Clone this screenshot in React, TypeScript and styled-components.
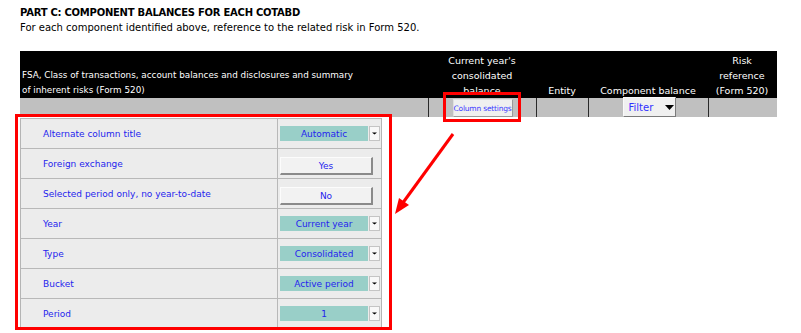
import styled, { createGlobalStyle } from "styled-components";

const GlobalStyle = createGlobalStyle`
    body {
        margin: 0;
        background: #ffffff;
        font-family: "DejaVu Sans", Verdana, sans-serif;
    }
`

type Setting = {
    label: string
    value: string
    kind: "select" | "button"
}

const settings: Setting[] = [
    {label: "Alternate column title", value: "Automatic", kind: "select"},
    {label: "Foreign exchange", value: "Yes", kind: "button"},
    {label: "Selected period only, no year-to-date", value: "No", kind: "button"},
    {label: "Year", value: "Current year", kind: "select"},
    {label: "Type", value: "Consolidated", kind: "select"},
    {label: "Bucket", value: "Active period", kind: "select"},
    {label: "Period", value: "1", kind: "select"},
]

const columns = [
    {width: 409, align: "left", size: 8.8, lines: ["FSA, Class of transactions, account balances and disclosures and summary", "of inherent risks (Form 520)"]},
    {width: 108, align: "center", size: 9.5, lines: ["Current year's", "consolidated", "balance"]},
    {width: 52, align: "center", size: 9.5, lines: ["Entity"]},
    {width: 120, align: "center", size: 9.5, lines: ["Component balance"]},
    {width: 68, align: "center", size: 9.5, lines: ["Risk", "reference", "(Form 520)"]},
]

export default function App() {
    return (
        <Page>
            <GlobalStyle/>
            <Title>PART C: COMPONENT BALANCES FOR EACH COTABD</Title>
            <Subtitle>For each component identified above, reference to the related risk in Form 520.</Subtitle>

            <Table>
                <HeaderRow>
                    {columns.map((c, i) => (
                        <HeadCell key={i} $width={c.width} $align={c.align} $size={c.size}>
                            {c.lines.map((l, j) => <div key={j}>{l}</div>)}
                        </HeadCell>
                    ))}
                </HeaderRow>
                <ToolRow>
                    <ToolCell $width={409}/>
                    <ToolCell $width={108}>
                        <SettingsButton>Column settings</SettingsButton>
                    </ToolCell>
                    <ToolCell $width={52}/>
                    <ToolCell $width={120}>
                        <FilterButton>
                            <span>Filter</span>
                            <svg width="9" height="5" viewBox="0 0 9 5"><polygon points="0,0 9,0 4.5,5" fill="#000"/></svg>
                        </FilterButton>
                    </ToolCell>
                    <ToolCell $width={68} $last/>
                </ToolRow>
            </Table>

            <Panel>
                {settings.map((s) => (
                    <PanelRow key={s.label}>
                        <Label>{s.label}</Label>
                        <ValueCell>
                            {s.kind === "select" ? (
                                <SelectWrap>
                                    <SelectField>{s.value}</SelectField>
                                    <SelectArrow>
                                        <svg width="5" height="3" viewBox="0 0 5 3"><polygon points="0,0.5 5,0.5 2.5,2.5" fill="#000"/></svg>
                                    </SelectArrow>
                                </SelectWrap>
                            ) : (
                                <ToggleButton>{s.value}</ToggleButton>
                            )}
                        </ValueCell>
                    </PanelRow>
                ))}
            </Panel>

            <Highlight style={{left: 15, top: 114, width: 377, height: 216}}/>
            <Highlight style={{left: 443, top: 92, width: 78, height: 30}}/>
            <Arrow width="70" height="90" viewBox="0 0 70 90">
                <line x1="63" y1="6" x2="12" y2="76" stroke="#ff0000" strokeWidth="3"/>
                <polygon points="5,86 9,70 19,77" fill="#ff0000"/>
            </Arrow>
        </Page>
    );
}

const Page = styled.div`
    position: relative;
    width: 801px;
    height: 333px;
    padding: 5px 0 0 20px;
    box-sizing: border-box;
    font-size: 10px;
    overflow: hidden;
`

const Title = styled.div`
    font-weight: 700;
    line-height: 15px;
    letter-spacing: -0.25px;
    color: #000;
`

const Subtitle = styled.div`
    line-height: 15px;
    color: #000;
`

const Table = styled.div`
    margin-top: 16px;
    width: 757px;
`

const HeaderRow = styled.div`
    display: flex;
    height: 47px;
    background: #000;
`

const HeadCell = styled.div<{ $width: number; $align: string; $size: number }>`
    flex: 0 0 ${p => p.$width}px;
    display: flex;
    flex-direction: column;
    justify-content: flex-end;
    text-align: ${p => p.$align};
    padding: 0 2px 0 ${p => p.$align === "left" ? 2 : 0}px;
    box-sizing: border-box;
    color: #fff;
    font-size: ${p => p.$size}px;
    line-height: 15px;
    white-space: nowrap;
`

const ToolRow = styled.div`
    display: flex;
    height: 19px;
    background: #c0c0c0;
`

const ToolCell = styled.div<{ $width: number; $last?: boolean }>`
    flex: 0 0 ${p => p.$width}px;
    border-right: ${p => p.$last ? "none" : "1px solid #2a2a2a"};
    box-sizing: border-box;
    display: flex;
    justify-content: center;
    align-items: flex-start;
`

const SettingsButton = styled.div`
    margin-top: 1px;
    width: 60px;
    height: 18px;
    box-sizing: border-box;
    background: #f0f0f0;
    border: 1px solid #e0e0e0;
    border-right-color: #9a9a9a;
    border-bottom-color: #9a9a9a;
    font-size: 7.5px;
    color: #3c3cff;
    display: flex;
    align-items: center;
    justify-content: center;
    white-space: nowrap;
    letter-spacing: -0.2px;
`

const FilterButton = styled.div`
    margin-top: -1px;
    margin-left: 1px;
    width: 53px;
    height: 20px;
    box-sizing: border-box;
    background: #f0f0f0;
    border: 1px solid #fafafa;
    border-right-color: #7a7a7a;
    border-bottom-color: #7a7a7a;
    display: flex;
    align-items: center;
    gap: 12px;
    padding-left: 5px;
    color: #3030ff;
    font-size: 10px;
`

const Panel = styled.div`
    margin-top: 1px;
    width: 362px;
    background: #ececec;
    border-left: 1px solid #b4b4b4;
    border-right: 1px solid #b4b4b4;
    box-sizing: border-box;
`

const PanelRow = styled.div`
    display: flex;
    height: 30px;
    border-top: 1px solid #b8b8b8;
    box-sizing: border-box;
`

const Label = styled.div`
    flex: 0 0 257px;
    box-sizing: border-box;
    padding-left: 22px;
    display: flex;
    align-items: center;
    color: #2424ee;
    font-size: 9px;
    border-right: 1px solid #b8b8b8;
    white-space: nowrap;
    overflow: hidden;
`

const ValueCell = styled.div`
    flex: 1;
    min-width: 0;
    padding: 7px 0 0 2px;
    box-sizing: border-box;
`

const SelectWrap = styled.div`
    display: flex;
    gap: 1px;
`

const SelectField = styled.div`
    flex: 0 0 88px;
    height: 15px;
    background: #99cfc8;
    color: #2424ee;
    display: flex;
    align-items: center;
    justify-content: center;
    font-size: 9px;
`

const SelectArrow = styled.div`
    flex: 0 0 11px;
    height: 15px;
    box-sizing: border-box;
    background: #f8f8f8;
    border: 1px solid #c4c4c4;
    display: flex;
    align-items: center;
    justify-content: center;
`

const ToggleButton = styled.div`
    margin-top: 1px;
    width: 93px;
    height: 18px;
    box-sizing: border-box;
    background: #f2f2f2;
    border: 1px solid #fcfcfc;
    border-right: 2px solid #8a8a8a;
    border-bottom: 2px solid #8a8a8a;
    color: #2424ee;
    display: flex;
    align-items: center;
    justify-content: center;
    font-size: 9px;
`

const Highlight = styled.div`
    position: absolute;
    border: 3px solid #ff0000;
    box-sizing: border-box;
    pointer-events: none;
`

const Arrow = styled.svg`
    position: absolute;
    left: 390px;
    top: 128px;
`
